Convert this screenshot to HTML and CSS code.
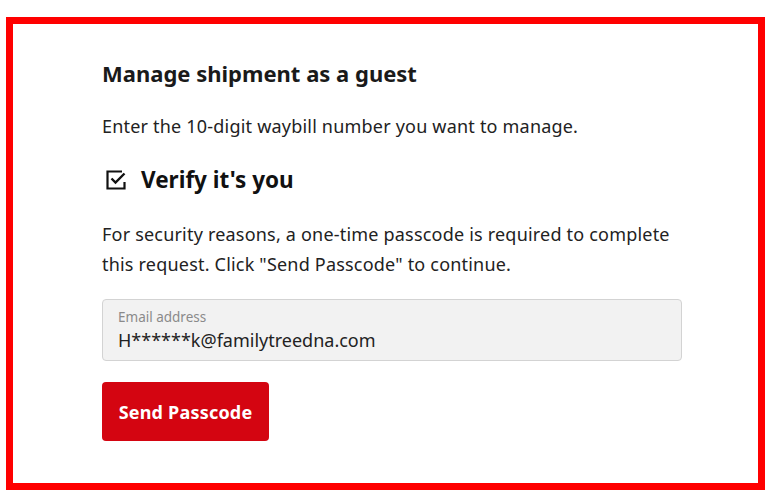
FILE: index.html
```html
<!DOCTYPE html>
<html lang="en">
<head>
<meta charset="utf-8">
<title>Manage shipment as a guest</title>
<link rel="stylesheet" href="styles.css">
</head>
<body>
<div class="frame">
  <div class="content">
    <h1 class="title">Manage shipment as a guest</h1>
    <p class="intro">Enter the 10-digit waybill number you want to manage.</p>
    <h2 class="verify">
      <svg class="check" width="22" height="22" viewBox="0 0 22 22" aria-hidden="true">
        <path d="M17 2.5 H2.5 V19.5 H19.5 V13" fill="none" stroke="#111" stroke-width="2.2"/>
        <path d="M6.5 9.5 L10.5 13.5 L19.5 4.5" fill="none" stroke="#111" stroke-width="2.4"/>
      </svg>
      <span>Verify it's you</span>
    </h2>
    <p class="info">For security reasons, a one-time passcode is required to complete this request. Click "Send Passcode" to continue.</p>
    <div class="field">
      <div class="field-label">Email address</div>
      <div class="field-value">H******k@familytreedna.com</div>
    </div>
    <button class="send">Send Passcode</button>
  </div>
</div>
</body>
</html>
```

FILE: styles.css
```css
* { box-sizing: border-box; }
html, body { margin: 0; padding: 0; background: #fff; }
body {
  font-family: "Noto Sans", "Liberation Sans", sans-serif;
  color: #222;
}
.frame {
  margin: 17px 0 0 6px;
  width: 759px;
  height: 473px;
  border: 7px solid #ff0000;
}
.content {
  padding: 35px 0 0 89px;
  width: 670px;
}
.title {
  margin: 0;
  font-size: 22px;
  font-weight: 700;
  line-height: 28px;
  color: #1a1a1a;
}
.intro {
  margin: 27px 0 0;
  font-size: 18px;
  letter-spacing: 0.2px;
  line-height: 24px;
}
.verify {
  margin: 27px 0 0;
  display: flex;
  align-items: center;
  gap: 14px;
  font-size: 22.5px;
  font-weight: 700;
  line-height: 30px;
  color: #111;
}
.check { flex: none; margin-left: 3px; }
.info {
  margin: 24px 0 0;
  font-size: 18px;
  letter-spacing: 0.2px;
  line-height: 30px;
  width: 580px;
}
.field {
  margin-top: 20px;
  width: 580px;
  height: 62px;
  background: #f2f2f2;
  border: 1px solid #d3d3d3;
  border-radius: 4px;
  padding: 9px 15px 0;
}
.field-label {
  font-size: 13.5px;
  line-height: 16px;
  color: #8a8a8a;
}
.field-value {
  margin-top: 3px;
  font-size: 18px;
  line-height: 24px;
  color: #222;
}
.send {
  display: block;
  margin-top: 21px;
  width: 167px;
  height: 59px;
  border: 0;
  border-radius: 4px;
  background: #d40511;
  color: #fff;
  font-family: inherit;
  font-size: 18px;
  letter-spacing: 0.2px;
  font-weight: 700;
  cursor: pointer;
}
```
